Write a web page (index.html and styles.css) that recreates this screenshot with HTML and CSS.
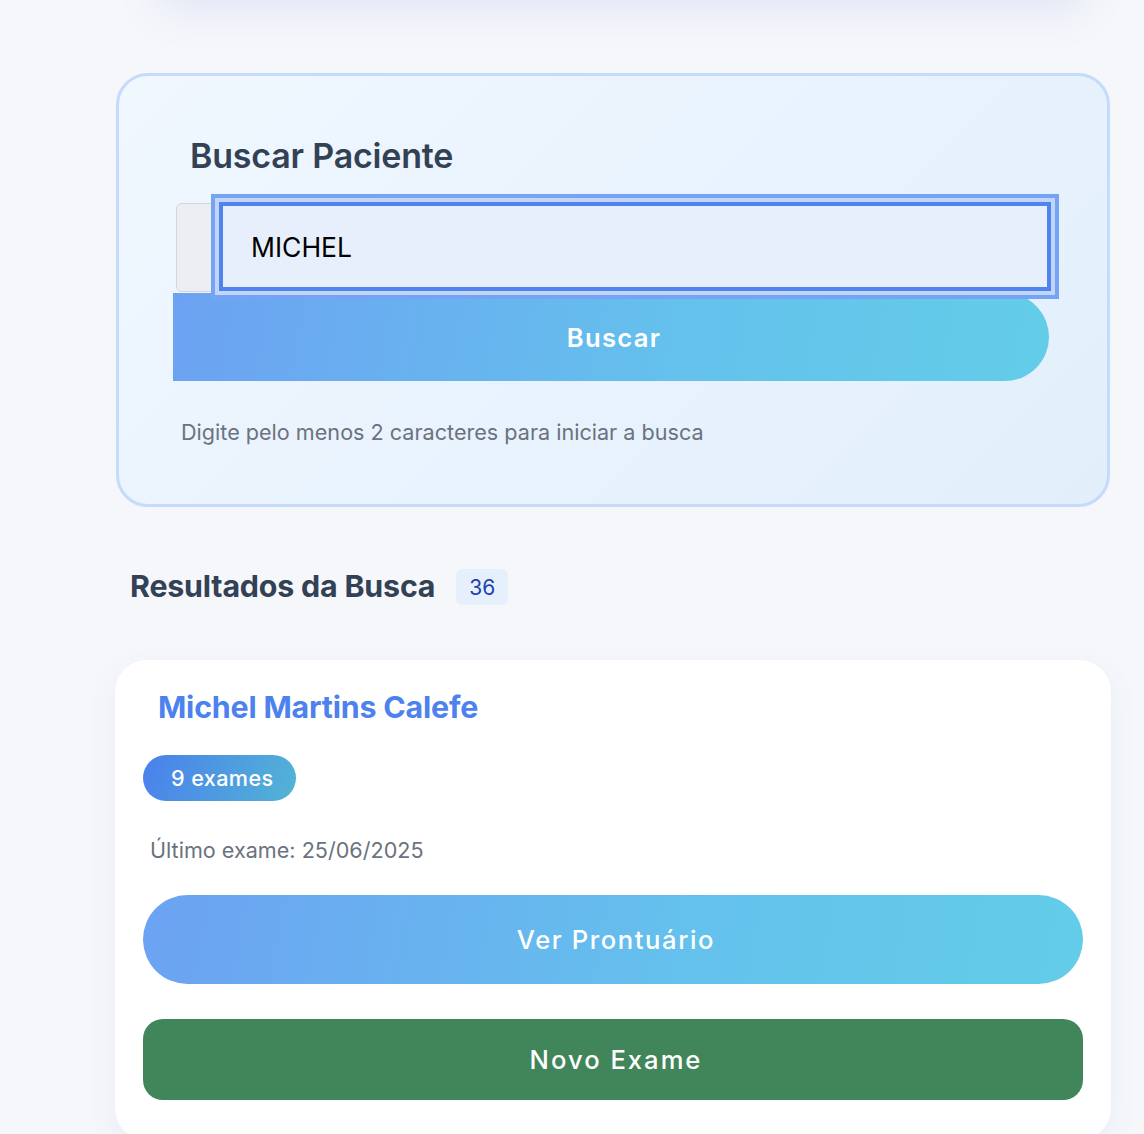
FILE: index.html
```html
<!DOCTYPE html>
<html lang="pt-BR">
<head>
<meta charset="utf-8">
<title>Buscar Paciente</title>
<link rel="stylesheet" href="styles.css">
</head>
<body>
<div class="topbar"></div>
<main class="page">
  <section class="search-card">
    <h2 class="search-title">Buscar Paciente</h2>
    <div class="input-group">
      <span class="input-prefix"></span>
      <input class="search-input" type="text" value="MICHEL">
    </div>
    <button class="btn-search" type="button">Buscar</button>
    <p class="hint">Digite pelo menos 2 caracteres para iniciar a busca</p>
  </section>

  <div class="results-head">
    <h3 class="results-title">Resultados da Busca</h3>
    <span class="results-count">36</span>
  </div>

  <article class="patient-card">
    <h4 class="patient-name">Michel Martins Calefe</h4>
    <div class="exam-badge-row"><span class="exam-badge">9 exames</span></div>
    <p class="last-exam">Último exame: 25/06/2025</p>
    <button class="btn-primary" type="button">Ver Prontuário</button>
    <button class="btn-success" type="button">Novo Exame</button>
  </article>
</main>
</body>
</html>
```

FILE: styles.css
```css
* { box-sizing: border-box; }

html, body {
  margin: 0;
  padding: 0;
  background: #f5f7fa;
  font-family: Inter, "Noto Sans", "Liberation Sans", sans-serif;
  overflow: hidden;
}

.topbar {
  height: 200px;
  margin: -200px 60px 0 160px;
  background: #f3f5fb;
  box-shadow: 0 8px 40px rgba(99, 120, 220, 0.14);
}

.page {
  padding: 73px 33px 0 115px;
  display: flex;
  flex-direction: column;
}

.search-card {
  margin: 0 1px;
  border: 3px solid #c4dbfb;
  border-radius: 32px;
  background: linear-gradient(135deg, #f0f7ff 0%, #e9f3fd 50%, #e2effb 100%);
  padding: 60px 58px 57px 54px;
  display: flex;
  flex-direction: column;
}

.search-title {
  margin: 0 0 27px 0;
  padding-left: 17px;
  font-size: 34px;
  line-height: 40px;
  font-weight: 600;
  color: #334155;
  letter-spacing: -0.2px;
}

.input-group {
  display: flex;
  margin-left: 3px;
  height: 89px;
  width: 875px;
}

.input-prefix {
  width: 43px;
  background: #eceef2;
  border: 1px solid #d3d6db;
  border-radius: 6px 0 0 6px;
}

.search-input {
  position: relative;
  z-index: 1;
  flex: 1;
  height: 89px;
  margin: -1px 0 0 0;
  border: 4px solid #4f83ee;
  background: #e8effc;
  padding: 0 0 0 28px;
  font-family: Inter, "Noto Sans", "Liberation Sans", sans-serif;
  font-size: 26.5px;
  color: #000;
  outline: none;
  box-shadow: 0 0 0 4px #c2d5f7, 0 0 0 8px #76a4f5;
}

.btn-search {
  margin-top: 1px;
  height: 88px;
  width: 876px;
  border: none;
  border-radius: 0 44px 44px 0;
  background: linear-gradient(100deg, #6ca2f2 0%, #64c2ec 60%, #63cde8 100%);
  color: #fff;
  font-family: Inter, "Noto Sans", "Liberation Sans", sans-serif;
  font-size: 25.6px;
  font-weight: 600;
  letter-spacing: 1.3px;
  padding: 0 0 0 6px;
}

.hint {
  margin: 36px 0 0 8px;
  font-size: 21.6px;
  line-height: 30px;
  color: #6b7280;
}

.results-head {
  display: flex;
  align-items: center;
  gap: 21px;
  margin-top: 61px;
  padding-left: 15px;
  height: 36px;
}

.results-title {
  margin: 0;
  font-size: 30.4px;
  line-height: 36px;
  font-weight: 700;
  color: #334155;
  letter-spacing: -0.2px;
}

.results-count {
  display: inline-flex;
  align-items: center;
  justify-content: center;
  width: 52px;
  height: 36px;
  margin-top: 2px;
  border-radius: 6px;
  background: #e6f0fc;
  color: #1e40af;
  font-size: 21px;
}

.patient-card {
  margin-top: 56px;
  background: #fff;
  border-radius: 32px;
  box-shadow: 0 10px 30px rgba(79, 110, 200, 0.07);
  padding: 29px 28px 40px 28px;
  display: flex;
  flex-direction: column;
}

.patient-name {
  margin: 0;
  padding-left: 15px;
  font-size: 30.4px;
  line-height: 36px;
  font-weight: 700;
  color: #4d82ee;
  letter-spacing: -0.2px;
}

.exam-badge-row {
  display: flex;
  margin-top: 30px;
}

.exam-badge {
  display: inline-flex;
  align-items: center;
  height: 46px;
  padding: 0 22px 0 28px;
  border-radius: 23px;
  background: linear-gradient(110deg, #4a80ec 0%, #52b4d5 100%);
  color: #fff;
  font-size: 21.6px;
  font-weight: 500;
  letter-spacing: 0.4px;
}

.last-exam {
  margin: 34px 0 0 7px;
  font-size: 21.6px;
  line-height: 30px;
  color: #6b7280;
}

.btn-primary {
  margin-top: 30px;
  height: 89px;
  border: none;
  border-radius: 45px;
  background: linear-gradient(100deg, #6ca2f2 0%, #64c2ec 60%, #63cde8 100%);
  color: #fff;
  font-family: Inter, "Noto Sans", "Liberation Sans", sans-serif;
  font-size: 25.6px;
  font-weight: 500;
  letter-spacing: 1.6px;
  padding: 0 0 0 6px;
}

.btn-success {
  margin-top: 35px;
  height: 81px;
  border: none;
  border-radius: 20px;
  background: #41855a;
  color: #fff;
  font-family: Inter, "Noto Sans", "Liberation Sans", sans-serif;
  font-size: 25.6px;
  font-weight: 500;
  letter-spacing: 2px;
  padding: 0 0 0 6px;
}
```
